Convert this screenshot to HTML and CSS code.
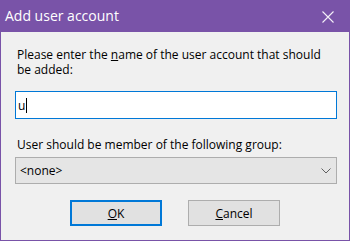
FILE: index.html
```html
<!DOCTYPE html>
<html lang="en">

<head>
    <meta charset="UTF-8" />
    <title>Add user account</title>
    <link rel="stylesheet" href="styles.css">
</head>

<body>
    <div class="window">
        <div class="titlebar">
            <span class="title">Add user account</span>
            <svg class="close" width="12" height="12" viewBox="0 0 12 12">
                <path d="M0.5 0.5 L11.5 11.5 M11.5 0.5 L0.5 11.5" stroke="#f4f0f8" stroke-width="1.1" fill="none" />
            </svg>
        </div>

        <div class="content">
            <label class="label">Please enter the <u>n</u>ame of the user account that should be added:</label>
            <div class="input">u<span class="caret"></span></div>

            <label class="label group-label">User should be member of the following <u>g</u>roup:</label>
            <div class="select">
                <span>&lt;none&gt;</span>
                <svg class="chevron" width="10" height="6" viewBox="0 0 10 6">
                    <path d="M0.5 0.5 L5 5 L9.5 0.5" stroke="#606060" stroke-width="1" fill="none" />
                </svg>
            </div>

            <div class="buttons">
                <button class="btn default"><u>O</u>K</button>
                <button class="btn"><u>C</u>ancel</button>
            </div>
        </div>
    </div>
</body>

</html>
```

FILE: styles.css
```css
body {
    margin: 0;
    font-family: 'Open Sans', 'Liberation Sans', sans-serif;
    font-size: 12px;
    color: #000;
}

.window {
    width: 350px;
    height: 241px;
    box-sizing: border-box;
    border: 1px solid #7953a8;
    border-top: none;
    background: #f0f0f0;
}

.titlebar {
    height: 32px;
    margin: 0 -1px;
    background: #7953a8;
    color: #fff;
    display: flex;
    align-items: center;
    justify-content: space-between;
    padding: 0 16px 0 5px;
}

.title {
    font-size: 14px;
    margin-top: -1px;
}

.close {
    display: block;
    margin-top: 1px;
}

.content {
    padding: 15px 12px 0 14px;
}

.label {
    display: block;
    line-height: 15px;
    padding-left: 2px;
}

.input {
    margin-top: 14px;
    height: 28px;
    box-sizing: border-box;
    border: 1px solid #0078d7;
    background: #fff;
    padding-left: 2px;
    display: flex;
    align-items: center;
}

.caret {
    width: 1px;
    height: 15px;
    background: #000;
    margin-left: 1px;
}

.group-label {
    margin-top: 18px;
}

.select {
    margin-top: 5px;
    height: 27px;
    box-sizing: border-box;
    border: 1px solid #adadad;
    background: #e5e5e5;
    display: flex;
    align-items: center;
    justify-content: space-between;
    padding: 0 5px 0 4px;
}

.chevron {
    display: block;
}

.buttons {
    margin-top: 16px;
    display: flex;
    justify-content: center;
    gap: 26px;
    margin-left: -14px;
    margin-right: -12px;
}

.btn {
    width: 92px;
    height: 26px;
    box-sizing: border-box;
    border: 1px solid #adadad;
    background: #e1e1e1;
    font-family: inherit;
    font-size: 12px;
    color: #000;
    padding: 0;
}

.btn.default {
    border: 2px solid #0078d7;
}
```
